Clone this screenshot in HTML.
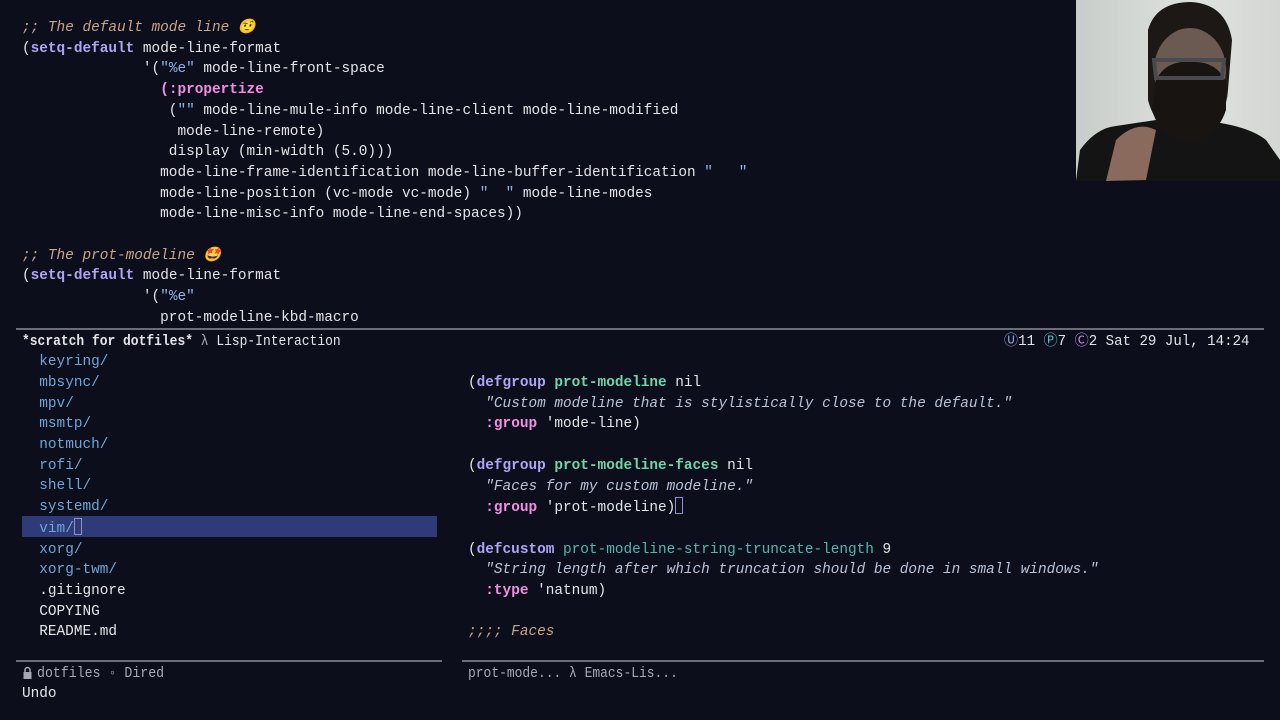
<!DOCTYPE html>
<html><head><meta charset="utf-8"><style>
body{margin:0;width:1280px;height:720px;background:#0d0e1c;overflow:hidden;position:relative;font-family:"Liberation Mono",monospace;font-size:14.4px;color:#e4e4e8}
pre{margin:0;position:absolute;font:inherit;line-height:20.7px;white-space:pre}
.c{color:#c6a58a;font-style:italic}
.k{color:#b0a4f5;font-weight:bold}
.m{color:#f08fe0;font-weight:bold}
.s{color:#8fb4e8}
.ds{color:#b9c3d6;font-style:italic}
.f{color:#6fd4aa;font-weight:bold}
.v{color:#4fb8b0}
.d{color:#6ea6d6}
.g{color:#a8a8b4}
.hl{position:absolute;left:22px;top:516px;width:415px;height:21px;background:#2f3b78}
.cur{display:inline-block;width:8px;height:17px;border:1px solid #8c94c8;vertical-align:-3px;box-sizing:border-box}
.line{position:absolute;height:2px;background:#6c6d78}
.cam{position:absolute;left:1076px;top:0;width:204px;height:181px;background:linear-gradient(90deg,#c9cdc9,#dfe2de 60%,#d3d6d3);overflow:hidden}
.sx{transform-origin:0 0}
</style></head><body>
<pre style="left:22px;top:18px"><span class="c">;; The default mode line 🤨</span>
(<span class="k">setq-default</span> mode-line-format
              '(<span class="s">"%e"</span> mode-line-front-space
                <span class="m">(:propertize</span>
                 (<span class="s">""</span> mode-line-mule-info mode-line-client mode-line-modified
                  mode-line-remote)
                 display (min-width (5.0)))
                mode-line-frame-identification mode-line-buffer-identification <span class="s">"   "</span>
                mode-line-position (vc-mode vc-mode) <span class="s">"  "</span> mode-line-modes
                mode-line-misc-info mode-line-end-spaces))

<span class="c">;; The prot-modeline 🤩</span>
(<span class="k">setq-default</span> mode-line-format
              '(<span class="s">"%e"</span>
                prot-modeline-kbd-macro</pre>
<div class="line" style="left:16px;top:328px;width:1248px"></div>
<div class="hl"></div>
<pre class="sx" style="left:22px;top:331.5px;transform:scaleX(0.9)"><b>*scratch for dotfiles*</b> <span class="g">λ</span> Lisp-Interaction</pre>
<pre style="left:22px;top:352.2px">  <span class="d">keyring/</span>
  <span class="d">mbsync/</span>
  <span class="d">mpv/</span>
  <span class="d">msmtp/</span>
  <span class="d">notmuch/</span>
  <span class="d">rofi/</span>
  <span class="d">shell/</span>
  <span class="d">systemd/</span>
  <span class="d">vim/</span><span class="cur"></span>
  <span class="d">xorg/</span>
  <span class="d">xorg-twm/</span>
  .gitignore
  COPYING
  README.md</pre>
<pre class="sx" style="left:1004px;top:331.5px;transform:scaleX(0.98)"><span style="color:#8fa8e0">Ⓤ</span>11 <span style="color:#5fc0c0">Ⓟ</span>7 <span style="color:#c095e6">Ⓒ</span>2 Sat 29 Jul, 14:24</pre>
<pre style="left:468px;top:373px">(<span class="k">defgroup</span> <span class="f">prot-modeline</span> nil
  <span class="ds">"Custom modeline that is stylistically close to the default."</span>
  <span class="m">:group</span> 'mode-line)

(<span class="k">defgroup</span> <span class="f">prot-modeline-faces</span> nil
  <span class="ds">"Faces for my custom modeline."</span>
  <span class="m">:group</span> 'prot-modeline)<span class="cur"></span>

(<span class="k">defcustom</span> <span class="v">prot-modeline-string-truncate-length</span> 9
  <span class="ds">"String length after which truncation should be done in small windows."</span>
  <span class="m">:type</span> 'natnum)

<span class="c">;;;; Faces</span></pre>
<div class="line" style="left:16px;top:660px;width:426px;height:1.5px"></div>
<div class="line" style="left:462px;top:660px;width:802px;height:1.5px"></div>
<svg style="position:absolute;left:23px;top:666px" width="9" height="13" viewBox="0 0 9 13"><path d="M2 6V4a2.5 2.5 0 0 1 5 0v2" fill="none" stroke="#a8a8b4" stroke-width="1.5"/><rect x="0.5" y="6" width="8" height="7" fill="#a8a8b4"/></svg>
<pre class="sx" style="left:37px;top:663.5px;color:#a8a8b4;transform:scaleX(0.92)">dotfiles ◦ Dired</pre>
<pre class="sx" style="left:468px;top:663.5px;color:#a8a8b4;transform:scaleX(0.9)">prot-mode... λ Emacs-Lis...</pre>
<pre style="left:22px;top:684.3px">Undo</pre>
<div class="cam">
<svg width="204" height="181" viewBox="0 0 204 181">
<path d="M0 181 L4 150 Q20 128 40 126 L80 120 L120 120 Q170 124 190 140 L204 160 L204 181Z" fill="#151414"/>
<path d="M72 30 Q80 2 115 2 Q150 4 156 40 L152 90 Q150 125 112 138 Q80 132 72 100Z" fill="#1c1816"/>
<ellipse cx="114" cy="70" rx="36" ry="42" fill="#6b5a52"/>
<path d="M80 80 Q90 60 114 62 Q140 60 150 82 L150 110 Q140 140 112 142 Q84 138 76 110Z" fill="#181412"/>
<path d="M78 60 L148 60 L146 78 L80 78Z" fill="none" stroke="#4a4a4e" stroke-width="4"/>
<path d="M40 140 Q60 120 80 130 L70 180 L30 181Z" fill="#8a6a5c"/>
</svg>
</div>
</body></html>
